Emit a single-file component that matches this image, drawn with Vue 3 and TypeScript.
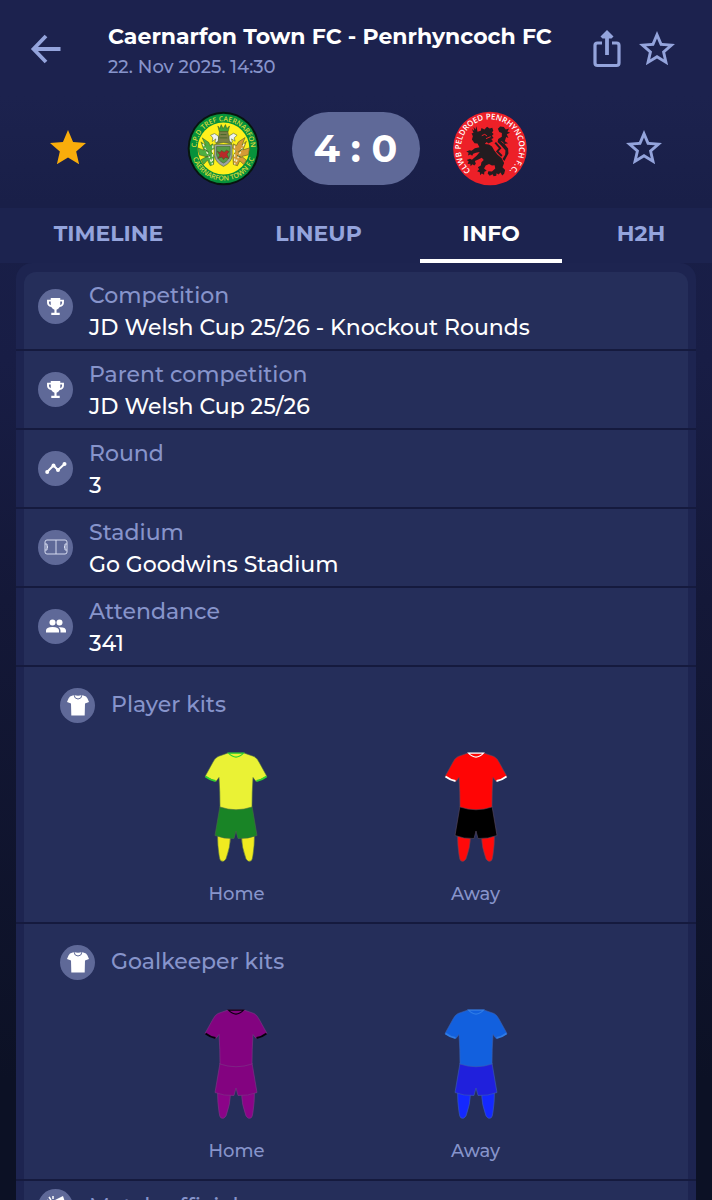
<script setup lang="ts">
import { ref } from 'vue'

type IconName = 'trophy' | 'chart' | 'pitch' | 'people'
interface Detail { label: string; value: string; icon: IconName }
interface Kit { side: string; shirt: string; trim: string; shorts: string; socks: string; line: string }
interface KitGroup { title: string; kits: Kit[] }

const tabs: string[] = ['TIMELINE', 'LINEUP', 'INFO', 'H2H']
const activeTab = ref<string>('INFO')

const details: Detail[] = [
  { label: 'Competition', value: 'JD Welsh Cup 25/26 - Knockout Rounds', icon: 'trophy' },
  { label: 'Parent competition', value: 'JD Welsh Cup 25/26', icon: 'trophy' },
  { label: 'Round', value: '3', icon: 'chart' },
  { label: 'Stadium', value: 'Go Goodwins Stadium', icon: 'pitch' },
  { label: 'Attendance', value: '341', icon: 'people' },
]

const kitGroups: KitGroup[] = [
  {
    title: 'Player kits',
    kits: [
      { side: 'Home', shirt: '#eaf235', trim: '#2fd12f', shorts: '#198426', socks: '#f0ea20', line: '#4a6b45' },
      { side: 'Away', shirt: '#ff0505', trim: '#ffffff', shorts: '#000000', socks: '#ff0a0a', line: '#5a4a60' },
    ],
  },
  {
    title: 'Goalkeeper kits',
    kits: [
      { side: 'Home', shirt: '#830380', trim: '#08000c', shorts: '#830380', socks: '#8b0488', line: '#7a3a86' },
      { side: 'Away', shirt: '#1260de', trim: '#2f7ce6', shorts: '#2020dc', socks: '#1428ff', line: '#3c5fae' },
    ],
  },
]

const starSolid = 'M12 17.270 18.180 21 16.540 13.970 22 9.240 14.810 8.630 12 2 9.190 8.630 2 9.240 7.460 13.970 5.820 21Z'
const starOutline = 'M22 9.240l-7.190-.620L12 2 9.190 8.630 2 9.240l5.460 4.730L5.820 21 12 17.270 18.180 21l-1.630-7.030L22 9.240zM12 15.400l-3.760 2.270 1-4.280-3.320-2.880 4.380-.380L12 6.100l1.710 4.040 4.380.380-3.320 2.880 1 4.280L12 15.400z'
</script>

<template>
  <div class="screen">
    <header class="topbar">
      <button class="icon-button back" type="button" aria-label="Back">
        <svg width="32" height="32" viewBox="0 0 32 32" fill="none" stroke="currentColor" stroke-width="3.8">
          <path d="M30.500 16H4M16 3 3.500 16 16 29" />
        </svg>
      </button>
      <div class="heading">
        <h1>Caernarfon Town FC - Penrhyncoch FC</h1>
        <p>22. Nov 2025. 14:30</p>
      </div>
      <button class="icon-button" type="button" aria-label="Share">
        <svg width="28" height="38" viewBox="0 0 28 38" fill="none" stroke="currentColor" stroke-width="3.2">
          <path d="M9 13H4.500Q2 13 2 15.500V33Q2 35.500 4.500 35.500H23.500Q26 35.500 26 33V15.500Q26 13 23.500 13H19" />
          <path d="M14 25V5" stroke-width="3.800" />
          <path d="M14 0 20.500 6.500 18.500 8.500H9.500L7.500 6.500Z" fill="currentColor" stroke="none" />
        </svg>
      </button>
      <button class="icon-button" type="button" aria-label="Add match to favourites">
        <svg width="36" height="36" viewBox="2 2 20 20" fill="currentColor"><path :d="starOutline" /></svg>
      </button>
    </header>

    <section class="scoreboard" aria-label="Score">
      <button class="icon-button gold" type="button" aria-label="Caernarfon Town FC is a favourite">
        <svg width="36" height="36" viewBox="2 2 20 20" fill="currentColor"><path :d="starSolid" /></svg>
      </button>
      <div class="result">
        <svg class="crest" viewBox="50 47 220 224" role="img" aria-label="Caernarfon Town FC crest">
          <defs>
            <path id="cae-top" d="M78 159A82 82 0 0 1 242 159" />
            <path id="cae-bottom" d="M63 159A97 97 0 0 0 257 159" />
          </defs>
          <ellipse cx="160" cy="159" rx="108" ry="111" fill="#07160f" />
          <ellipse cx="160" cy="159" rx="102" ry="105" fill="#07913b" />
          <circle cx="160" cy="159" r="78" fill="#fff01c" />
          <g class="crest-text gold-text">
            <text><textPath href="#cae-top" startOffset="50%" text-anchor="middle">C.P.D TREF CAERNARFON</textPath></text>
            <text><textPath href="#cae-bottom" startOffset="50%" text-anchor="middle">CAERNARFON TOWN F.C</textPath></text>
          </g>
          <g stroke="#365323" stroke-width="1.500" stroke-linejoin="round">
            <path fill="#3fa23c" d="M143 91 149 99 153 87 159 99 166 87 170 99 178 91 174 108H147Z" />
            <path fill="#4eae42" d="M92 139 106 150 96 127 116 141 119 150 128 145 132 159 122 166 132 183 130 207 120 211 112 194 100 207 92 193 108 184 87 178 82 157 101 164Z" />
            <path fill="#d59b36" d="M229 137 216 149 225 126 205 139 199 150 190 145 188 158 197 167 188 184 190 207 202 211 209 196 221 207 229 194 215 183 235 178 239 157 219 163Z" />
            <path fill="#eef2ee" d="M121 119 133 114 144 121 148 142 134 140 137 130 126 138 128 127Z" />
            <path fill="#eef2ee" d="M201 119 190 113 177 121 173 142 187 140 184 130 195 137 192 127Z" />
            <path fill="#7b7f48" d="M148 108H173L178 136 185 145 160 141 137 145 144 136Z" />
            <path fill="#9aa4a0" d="M133 147H186V181Q184 202 160 213 136 202 133 181Z" />
            <path fill="#579b48" d="M139 153H180V178Q177 194 160 203 142 194 139 178Z" />
            <path fill="#b82a29" d="M141 167 150 171 154 165 162 170 169 164 177 168 171 176 176 189 165 186 160 192 155 185 143 189 149 179Z" />
          </g>
          <path d="M128 150 126 207M193 150 194 207M98 145 124 200M222 145 198 199" fill="none" stroke="#edf1cd" stroke-width="4" stroke-dasharray="8 5" />
          <path d="M101 160 116 170M106 185 120 180M218 160 204 170M214 186 201 180M151 117H169M148 127H172" fill="none" stroke="#49682a" stroke-width="3" />
        </svg>
        <div class="score">4 : 0</div>
        <svg class="crest away" viewBox="245 45 228 228" role="img" aria-label="Penrhyncoch FC crest">
          <defs>
            <path id="pen-ring" d="M300 226A89 89 0 1 1 418 226" />
          </defs>
          <circle cx="359" cy="159" r="112" fill="#ed2028" />
          <text class="crest-text white-text"><textPath href="#pen-ring" startOffset="50%" text-anchor="middle">CLWB PELDROED PENRHYNCOCH F.C.</textPath></text>
          <path fill="#231c20" d="M321 108 331 105 333 97 342 101 350 93 358 98 366 96 369 105 365 110 370 115 365 120 370 127 363 130 368 137 354 144 349 139 343 145 356 147 365 153 372 165 382 178 394 188 402 203 397 216 405 224 402 236 396 241 391 232 385 238 379 234 378 242 370 243 367 237 358 242 352 235 354 228 365 229 375 220 373 210 365 211 356 206 346 211 341 220 349 227 342 230 341 239 334 235 329 240 328 231 320 228 326 222 322 216 331 211 333 201 340 194 334 187 325 192 313 197 316 205 311 211 306 207 300 213 299 205 291 206 294 198 288 194 298 190 304 193 319 180 328 170 316 172 308 175 305 181 299 177 292 180 294 172 287 168 297 164 303 166 313 158 327 155 321 144 312 143 304 132 307 122 303 113 309 112 304 100 311 105 309 93 315 101 318 91Z" />
          <path fill="#231c20" d="M397 191 405 178 406 165 393 150 382 139 384 130 395 123 395 112 387 109 383 99 390 92 401 94 407 101 417 98 412 107 420 111 410 116 415 127 408 124 404 137 414 143 403 145 414 159 415 174 408 187 403 197Z" />
          <path d="M334 120 343 116 350 121M347 129 361 123M394 137 401 144" fill="none" stroke="#ed2028" stroke-width="3" />
          <path d="M375 141 390 158 381 168 395 182" fill="none" stroke="#231c20" stroke-width="6" />
        </svg>
      </div>
      <button class="icon-button" type="button" aria-label="Add Penrhyncoch FC to favourites">
        <svg width="36" height="36" viewBox="2 2 20 20" fill="currentColor"><path :d="starOutline" /></svg>
      </button>
    </section>

    <nav class="tabs" role="tablist" aria-label="Match sections">
      <button
        v-for="tab in tabs"
        :key="tab"
        type="button"
        role="tab"
        :aria-selected="activeTab === tab"
        :class="['tab', { active: activeTab === tab }]"
        @click="activeTab = tab"
      >{{ tab }}</button>
    </nav>

    <main class="content">
      <ul class="panel">
        <li v-for="item in details" :key="item.label" class="entry">
          <div class="detail">
            <span class="badge">
              <svg v-if="item.icon === 'trophy'" width="19" height="19" viewBox="0 0 18 18">
                <path fill="#fff" d="M4.500 1H13.500V2.500H17V5.500Q17 8.800 13 9.500 11.800 11.600 10 12V15H13V17H5V15H8V12Q6.200 11.600 5 9.500 1 8.800 1 5.500V2.500H4.500ZM2.800 4.200V5.500Q2.800 7.200 4.500 7.700V4.200ZM13.500 4.200V7.700Q15.200 7.200 15.200 5.500V4.200Z" />
              </svg>
              <svg v-else-if="item.icon === 'chart'" width="22" height="14" viewBox="0 0 22 14" fill="#fff">
                <path d="M2 11 8.500 4.500 13 9 19.500 3" fill="none" stroke="#fff" stroke-width="2" />
                <circle cx="2.200" cy="11" r="2" /><circle cx="8.500" cy="4.400" r="2" /><circle cx="13" cy="9" r="2" /><circle cx="19.500" cy="3" r="2" />
              </svg>
              <svg v-else-if="item.icon === 'pitch'" width="24" height="16" viewBox="0 0 24 16" fill="none" stroke="#d5daee" stroke-width="1">
                <rect x="1" y="1" width="22" height="14" rx="2" />
                <path d="M12 1V15M1 5H3V11H1M3 6.500Q4.500 8 3 9.500M23 5H21V11H23M21 6.500Q19.500 8 21 9.500" />
              </svg>
              <svg v-else width="22" height="14" viewBox="0 0 22 14" fill="#fff">
                <circle cx="7.500" cy="3.500" r="3" /><circle cx="14.500" cy="3.500" r="3" />
                <path d="M1 13.500V11.500Q1 8 7.500 8T14 11.500V13.500ZM15.500 13.500V11.500Q15.500 9.500 13.600 8.200 21 7.800 21 11.500V13.500Z" />
              </svg>
            </span>
            <div class="copy">
              <span class="label">{{ item.label }}</span>
              <span class="value">{{ item.value }}</span>
            </div>
          </div>
        </li>

        <li v-for="group in kitGroups" :key="group.title" class="entry">
          <div class="kit-group">
            <h2>
              <span class="badge">
                <svg width="22" height="22" viewBox="0 0 22 22">
                  <path fill="#fff" d="M7 1Q11 2.500 15 1L19 2.500Q20.500 3.500 22 8L18 9.500 17.700 21.500H4.300L4 9.500 0 8Q1.500 3.500 3 2.500Z" />
                  <path d="M7 1Q7.500 5 11 5T15 1" fill="none" stroke="#5f6998" stroke-width="1" />
                </svg>
              </span>
              {{ group.title }}
            </h2>
            <div class="kits">
              <figure v-for="kit in group.kits" :key="kit.side">
                <svg width="64" height="110" viewBox="0 0 64 110" :stroke="kit.line" stroke-width="0.600">
                  <path :fill="kit.socks" d="M13.500 82 26.500 84Q26.500 95 22 107 20 110.500 17 109 15.500 108 15 103 13.500 94 13.500 82ZM50.500 82 37.500 84Q37.500 95 42 107 44 110.500 47 109 48.500 108 49 103 50.500 94 50.500 82Z" />
                  <path :fill="kit.shorts" d="M16 54H48L53 83.500Q44 87 34 86.500L32 79 30 86.500Q20 87 11 83.500Z" />
                  <path :fill="kit.shirt" d="M24 1H40L50 4.500Q53 6 55 10L63 24.500 52 29.500 49 25.500Q48 40 48 55 32 60.500 16 55 16 40 15 25.500L12 29.500 1 24.500 9 10Q11 6 14 4.500Z" />
                  <path d="M1.500 24.500Q6 28 11.500 29M62.500 24.500Q58 28 52.500 29" fill="none" :stroke="kit.trim" stroke-width="1.800" />
                  <path d="M24.500 1.200H39.500Q32 9 24.500 1.200Z" fill="none" :stroke="kit.trim" stroke-width="1.200" />
                </svg>
                <figcaption>{{ kit.side }}</figcaption>
              </figure>
            </div>
          </div>
        </li>

        <li class="entry">
          <div class="detail officials">
            <span class="badge">
              <svg width="22" height="22" viewBox="0 0 22 22">
                <path fill="#fff" d="M8 5 18 0 20 6 15 9Q17 18 10 19 3 19 3 13Q3 8 8 5Z" />
                <path d="M2 4 4 6M4 1 6 4M8 0V3" stroke="#fff" stroke-width="1.500" />
              </svg>
            </span>
            <div class="copy">
              <span class="label">Match officials</span>
            </div>
          </div>
        </li>
      </ul>
    </main>
  </div>
</template>

<style>
body {
  margin: 0;
  background: #0c1126;
}
</style>

<style scoped>
.screen {
  display: flex;
  flex-direction: column;
  height: 100vh;
  overflow: hidden;
  background: linear-gradient(#1c224e 0, #1c224e 8%, #191f48 17%, #181d45 30%, #141838 50%, #0c1125 90%);
  color: #fff;
  font-family: Montserrat, Inter, "Open Sans", sans-serif;
}

.icon-button {
  display: flex;
  padding: 0;
  border: 0;
  background: none;
  color: #94a4dc;
  cursor: pointer;
}

.gold { color: #f9ad0b; }

.topbar {
  display: flex;
  align-items: center;
  flex: none;
  gap: 18px;
  height: 98px;
  padding: 0 37px 0 30px;
  box-sizing: border-box;
}

.back { margin-right: 28px; }

.heading {
  flex: 1;
  min-width: 0;
  padding-top: 4px;
}

h1,
.heading p {
  margin: 0;
  white-space: nowrap;
}

h1 {
  font-size: 22px;
  line-height: 32px;
  font-weight: 700;
}

.heading p {
  color: #8794cb;
  font-size: 18px;
  line-height: 28px;
  font-weight: 500;
}

.scoreboard {
  display: flex;
  align-items: center;
  justify-content: space-between;
  flex: none;
  height: 110px;
  padding: 0 50px 10px;
  box-sizing: border-box;
}

.result {
  display: flex;
  align-items: center;
  gap: 32px;
  margin-left: 2px;
}

.crest {
  width: 73px;
  height: 75px;
  overflow: visible;
}

.crest.away { width: 76px; }

.crest-text {
  font-family: "Open Sans", sans-serif;
  font-weight: 600;
}

.gold-text {
  fill: #d8d83c;
  font-size: 21px;
}

.white-text {
  fill: #fff;
  font-size: 24px;
}

.score {
  width: 128px;
  border-radius: 40px;
  background: #5f6998;
  font-size: 38px;
  line-height: 73px;
  font-weight: 700;
  text-align: center;
}

.tabs {
  display: grid;
  grid-template-columns: 217fr 203fr 142fr 150fr;
  flex: none;
  height: 55px;
  background: #1c234f;
}

.tab {
  padding: 0;
  border: 0;
  border-bottom: 4px solid transparent;
  background: none;
  color: #94a4dc;
  font: inherit;
  font-size: 22px;
  font-weight: 700;
  cursor: pointer;
}

.tab:last-child { padding-left: 8px; }

.tab.active {
  border-color: #fff;
  color: #fff;
}

.content {
  flex: 1;
  min-height: 0;
  overflow-y: auto;
  padding: 0 16px;
  scrollbar-width: none;
}

.panel {
  margin: 0;
  padding: 9px 0 0;
  border-radius: 16px 16px 0 0;
  background: #1d2450;
  list-style: none;
}

.entry {
  padding: 0 8px;
  border-bottom: 2px solid #151a3e;
}

.detail,
.kit-group {
  background: #252e5a;
}

.entry:first-child .detail { border-radius: 12px 12px 0 0; }

.detail {
  display: flex;
  align-items: center;
  gap: 16px;
  padding: 8px 14px 5px;
}

.badge {
  display: flex;
  align-items: center;
  justify-content: center;
  flex: none;
  width: 35px;
  height: 35px;
  border-radius: 50%;
  background: #5f6998;
}

.detail .badge { margin-bottom: 4px; }

.entry:first-child .badge { margin-bottom: 12px; }

.copy {
  display: flex;
  flex-direction: column;
  font-size: 22px;
  line-height: 32px;
  font-weight: 500;
}

.detail.officials { align-items: flex-start; }

.officials .copy { line-height: 36px; }

.label { color: #8794cb; }

.kit-group {
  padding: 20px 0 14px;
}

h2 {
  display: flex;
  align-items: center;
  gap: 16px;
  margin: 0;
  padding-left: 36px;
  color: #8794cb;
  font-size: 22px;
  line-height: 36px;
  font-weight: 500;
}

.kits {
  display: flex;
  justify-content: center;
  padding-top: 29px;
}

figure {
  display: flex;
  flex: 0 0 36%;
  flex-direction: column;
  align-items: center;
  gap: 18px;
  margin: 0;
}

figcaption {
  color: #8794cb;
  font-size: 18px;
  line-height: 28px;
  font-weight: 500;
}
</style>
